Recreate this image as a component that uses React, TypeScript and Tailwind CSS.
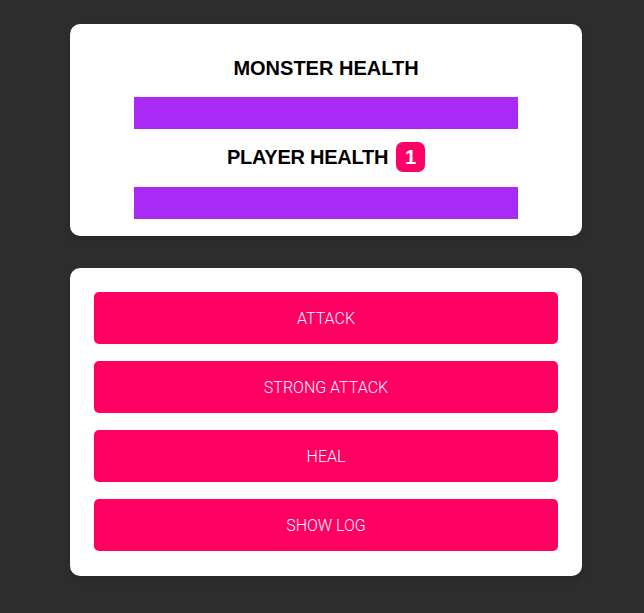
import React from 'react';

const actions = ['ATTACK', 'STRONG ATTACK', 'HEAL', 'SHOW LOG'];

function HealthBar() {
  return <div className="mx-auto h-[32px] w-[384px] bg-[#a82af4]" />;
}

export default function App() {
  return (
    <div className="min-h-[613px] bg-[#2d2d2d] pt-[24px] pl-[8px] font-['Liberation_Sans',Arial,sans-serif]">
      <section className="mx-auto w-[512px] rounded-[10px] bg-white pt-[32px] pb-[17px] text-center shadow-md">
        <h2 className="h-[24px] text-[20px] font-bold leading-[24px] text-black">MONSTER HEALTH</h2>
        <div className="mt-[17px]">
          <HealthBar />
        </div>
        <div className="mt-[13px] flex h-[30px] items-center justify-center gap-[8px]">
          <h2 className="text-[20px] font-bold leading-[24px] tracking-[-0.25px] text-black">PLAYER HEALTH</h2>
          <span className="flex h-[30px] w-[29px] items-center justify-center rounded-[7px] bg-[#ff0066] text-[20px] font-bold text-white">
            1
          </span>
        </div>
        <div className="mt-[15px]">
          <HealthBar />
        </div>
      </section>

      <section className="mx-auto mt-[32px] flex w-[512px] flex-col gap-[17px] rounded-[10px] bg-white px-[24px] pt-[24px] pb-[25px] shadow-md">
        {actions.map((label) => (
          <button
            key={label}
            className="h-[52px] w-full rounded-[5px] bg-[#ff0062] pt-[2px] font-['Roboto',sans-serif] text-[16px] font-light text-white"
          >
            {label}
          </button>
        ))}
      </section>
    </div>
  );
}
